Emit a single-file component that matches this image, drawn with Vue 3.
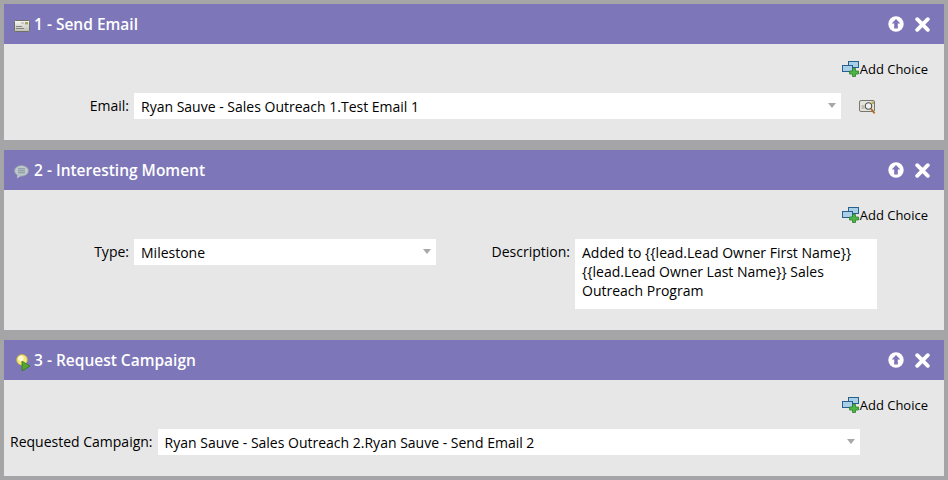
<script setup>
const actions = [
  { id: 1, title: '1 - Send Email', icon: 'mail' },
  { id: 2, title: '2 - Interesting Moment', icon: 'bubble' },
  { id: 3, title: '3 - Request Campaign', icon: 'bulb' }
]
</script>

<template>
  <div class="page">
    <section v-for="a in actions" :key="a.id" class="panel">
      <header class="head">
        <span class="ticon" :class="'t-' + a.icon">
          <svg v-if="a.icon === 'mail'" width="16" height="12" viewBox="0 0 16 12">
            <defs><linearGradient id="mg" x1="0" y1="0" x2="0" y2="1"><stop offset="0" stop-color="#f8f8f4"/><stop offset="1" stop-color="#bdbdb4"/></linearGradient></defs>
            <rect x="0.5" y="0.5" width="15" height="11" rx="1" fill="url(#mg)" stroke="#6f6f68"/>
            <rect x="11" y="2" width="3" height="2.5" fill="#a3a06a"/>
            <path d="M2 6.5h6M2 8.5h8" stroke="#85857f" stroke-width="1"/>
            <path d="M7 3h3" stroke="#a8a8a0" stroke-width="1"/>
          </svg>
          <svg v-else-if="a.icon === 'bubble'" width="15" height="14" viewBox="0 0 15 14">
            <ellipse cx="7.5" cy="5.8" rx="7" ry="5.4" fill="#bcc8cc" stroke="#929ca4" stroke-width="0.8"/>
            <path d="M3.5 10l-.7 3.6 4.4-2.8z" fill="#bcc8cc"/>
            <path d="M4 3.8h7M4 5.8h7M4 7.8h7" stroke="#87919a" stroke-width="1"/>
          </svg>
          <svg v-else width="17" height="18" viewBox="0 0 17 18">
            <circle cx="8" cy="5.8" r="5.4" fill="#f2e67c" stroke="#c2b035" stroke-width="0.7"/>
            <circle cx="7" cy="4.4" r="2.6" fill="#fdf9d8"/>
            <path d="M8 7.2l8 4.9-8 4.9z" fill="#55a52f" stroke="#2f7a1e" stroke-width="0.8"/>
          </svg>
        </span>
        <h2 class="title">{{ a.title }}</h2>
        <span class="spacer"></span>
        <svg class="hbtn" width="16" height="16" viewBox="0 0 16 16">
          <circle cx="8" cy="8" r="7.7" fill="#fff"/>
          <path d="M8 3l4.3 4.6H9.8V12.6H6.2V7.6H3.7z" fill="#7d76b8"/>
        </svg>
        <svg class="hbtn close" width="15" height="15" viewBox="0 0 15 15">
          <path d="M2.2 2.2l10.6 10.6M12.8 2.2L2.2 12.8" stroke="#fff" stroke-width="3.8" stroke-linecap="round"/>
        </svg>
      </header>

      <div class="body" :class="'b' + a.id">
        <div class="add">
          <svg width="18" height="16" viewBox="0 0 18 16">
            <rect x="6.5" y="0.5" width="10" height="6" fill="#a9cfe8" stroke="#27608c"/>
            <rect x="0.5" y="4.5" width="10" height="6" fill="#a9cfe8" stroke="#27608c"/>
            <path d="M10 6.5h3" stroke="#27608c"/>
            <path d="M10.5 7.5h3v2.5h3v3h-3v2.5h-3V13h-3v-3h3z" fill="#4eb548" stroke="#2c7d2c" stroke-width="0.8"/>
          </svg>
          <span>Add Choice</span>
        </div>

        <div v-if="a.id === 1" class="row">
          <label class="lab lab1">Email:</label>
          <div class="sel w-email">Ryan Sauve - Sales Outreach 1.Test Email 1<i class="arrow"></i></div>
          <svg class="find" width="17" height="15" viewBox="0 0 17 15">
            <rect x="0.5" y="0.5" width="15" height="11" rx="1.5" fill="#e4e4dc" stroke="#77776e"/>
            <path d="M2.5 6h3M2.5 8h3" stroke="#9a9a92"/>
            <circle cx="9.5" cy="6" r="3.2" fill="#eef0f0" stroke="#55554f" stroke-width="1.1"/>
            <rect x="12.5" y="1.5" width="2.5" height="2.5" fill="#b5b25e"/>
            <path d="M12 8.8L15.6 13.4" stroke="#b06a28" stroke-width="1.8"/>
          </svg>
        </div>

        <div v-else-if="a.id === 2" class="row top">
          <label class="lab lab1">Type:</label>
          <div class="sel w-type">Milestone<i class="arrow"></i></div>
          <label class="lab lab-desc">Description:</label>
          <div class="area">Added to {{ '{{' }}lead.Lead Owner First Name}}<br>{{ '{{' }}lead.Lead Owner Last Name}} Sales<br>Outreach Program</div>
        </div>

        <div v-else class="row">
          <label class="lab lab3">Requested Campaign:</label>
          <div class="sel w-camp">Ryan Sauve - Sales Outreach 2.Ryan Sauve - Send Email 2<i class="arrow"></i></div>
        </div>
      </div>
    </section>
  </div>
</template>

<style>
html, body { margin: 0; background: #a5a5a8; }
</style>

<style scoped>
.page {
  width: 948px;
  height: 480px;
  box-sizing: border-box;
  padding: 4px;
  display: flex;
  flex-direction: column;
  gap: 10px;
  overflow: hidden;
  background: #a5a5a8;
  font-family: "Open Sans", sans-serif;
  font-size: 14px;
  color: #000;
}
.panel { background: #e7e7e7; }
.head {
  height: 40px;
  background: #7d76b8;
  display: flex;
  align-items: center;
  padding: 0 14px 0 10px;
  color: #fff;
}
.ticon { width: 20px; height: 16px; display: flex; align-items: flex-start; }
.ticon svg { flex: none; }
.t-mail svg { margin-top: 4px; }
.t-bubble svg { margin-top: 3px; }
.t-bulb svg { margin-top: 2px; }
.title { margin: 0; font-size: 15.5px; font-weight: 600; line-height: 40px; }
.spacer { flex: 1; }
.hbtn { display: block; margin-right: 0; }
.close { margin-left: 11px; }
.body { box-sizing: border-box; height: 96px; padding-top: 16px; }
.b2 { height: 140px; }
.add {
  height: 18px;
  display: flex;
  align-items: center;
  justify-content: flex-end;
  padding-right: 16px;
  line-height: 18px;
  font-size: 13px;
}
.row { display: flex; align-items: center; margin-top: 15px; }
.top { align-items: flex-start; }
.lab { text-align: right; line-height: 26px; white-space: nowrap; }
.lab1 { width: 125px; margin-right: 5px; }
.lab3 { margin-left: 6px; margin-right: 5px; }
.lab-desc { width: 134px; margin-right: 5px; }
.sel {
  position: relative;
  box-sizing: border-box;
  height: 26px;
  background: #fff;
  padding-left: 7px;
  line-height: 27px;
  white-space: nowrap;
}
.w-email { width: 707px; }
.w-type { width: 302px; }
.w-camp { width: 702px; }
.arrow {
  position: absolute;
  right: 5px;
  top: 10px;
  border-left: 4.5px solid transparent;
  border-right: 4.5px solid transparent;
  border-top: 5px solid #a8a8a8;
}
.find { margin-left: 18px; margin-top: 2px; }
.area {
  box-sizing: border-box;
  width: 302px;
  height: 70px;
  background: #fff;
  padding: 4px 7px;
  line-height: 19px;
}
</style>
